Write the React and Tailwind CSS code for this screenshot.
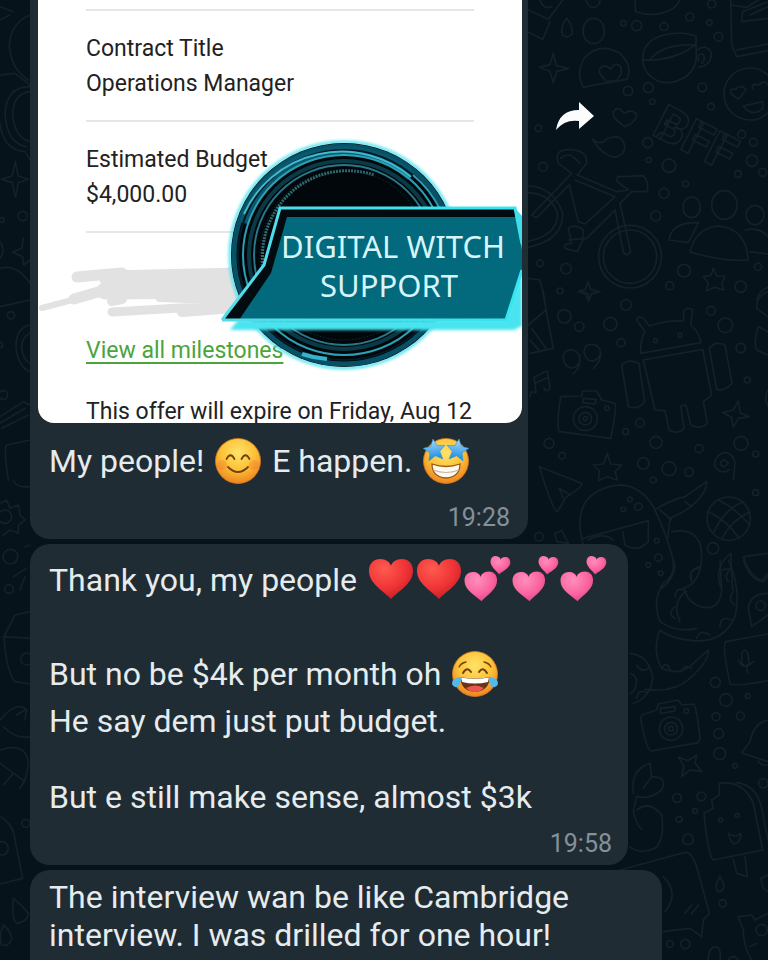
import React from "react";

const THIRD = 1 / 3;

function Dots({ items }) {
  return items.map(([x, y, r]) => <circle key={`${x}-${y}`} cx={x} cy={y} r={r} />);
}

function Wallpaper() {
  return (
    <svg
      aria-hidden="true"
      viewBox="0 0 768 960"
      preserveAspectRatio="xMaxYMin slice"
      className="absolute inset-0 h-full w-full"
      fill="none"
      stroke="#132128"
      strokeLinecap="round"
      strokeLinejoin="round"
      strokeWidth="5"
    >
      {/* upper right: cups, hearts, bicycle, people */}
      <g transform={`translate(520 0) scale(${THIRD})`}>
        <path d="M345 0 L347 35 Q400 55 455 28 Q475 15 478 0" />
        <path d="M25 30 L85 58 L128 0 M22 95 L68 118 L90 65 M60 0 Q70 30 95 20" />
        <path d="M140 55 Q118 85 128 105 Q145 118 157 100 Q160 80 140 55Z" />
        <ellipse cx="221" cy="93" rx="32" ry="38" />
        <path d="M198 0 Q205 25 225 22 Q240 15 240 0" />
        <path d="M100 160 L108 196 L145 206 L110 214 L100 248 L90 214 L58 202 L90 194Z" />
        <path d="M190 262 Q165 215 195 172 Q240 125 300 160 Q340 200 320 238 L265 248 Q220 255 190 262Z" />
        <path d="M262 245 Q225 215 245 200 Q262 195 272 208 Q285 185 300 197 Q312 220 290 240Z" />
        <path d="M368 180 Q365 130 420 108 Q480 90 528 108 L528 150 Q535 200 500 228 Q460 255 420 245 Q370 225 368 180 Q460 185 525 135 Q430 130 390 178" />
        <path d="M530 150 Q560 130 573 158 Q577 195 535 202 M536 182 Q530 160 548 162 Q560 175 545 190" />
        <path d="M632 0 L635 135 L650 170 L744 152 M650 150 L744 132 M635 15 L680 22 L715 0 M744 55 L665 65 L668 35 L744 5 M690 45 L744 20" />
        <circle cx="690" cy="282" r="78" />
        <path d="M635 282 Q625 265 645 268 Q665 250 678 270 L655 298Z M700 268 Q690 248 715 255 Q735 238 744 255 M670 318 L728 305 Q735 335 700 338 Q680 335 670 318Z" />
        <path d="M315 380 Q275 355 280 335 Q295 315 312 340 Q340 325 350 345 Q350 365 315 380Z" />
        <path d="M218 418 Q245 438 258 418 Q295 400 310 425 Q325 460 285 472 Q245 465 218 418Z" />
        <text
          transform="translate(392 402) rotate(27)"
          className="font-['Roboto',sans-serif] font-black"
          fontSize="145"
        >
          BFF
        </text>
        <path d="M155 520 L115 490 Q100 450 145 448 Q205 450 200 490 L172 525 L290 575 L325 570 L292 545 Q285 525 310 530 L370 527 Q390 550 380 575 L335 575 L300 610 L332 755 Q320 775 310 755 L285 630 L200 715 L145 720 M155 520 L35 645 Q50 660 62 640 L148 555 L175 665 L195 672 L285 590 L165 540 M122 475 Q145 455 165 475 L180 490" />
        <path d="M145 685 Q165 670 190 690 L188 722 L172 755 L135 745 Q130 730 155 730Z" />
        <circle cx="330" cy="770" r="94" />
        <circle cx="330" cy="770" r="80" />
        <path d="M25 558 Q100 560 128 640 Q130 720 25 742 M25 578 Q92 580 113 642 Q112 705 25 724" />
        <ellipse cx="515" cy="622" rx="26" ry="31" />
        <ellipse cx="613" cy="615" rx="38" ry="43" />
        <ellipse cx="705" cy="645" rx="27" ry="29" />
        <path d="M510 755 Q530 680 600 678 Q680 690 684 780 Q600 785 510 755Z M447 720 Q455 665 535 668 L505 728Z M675 690 Q720 680 744 710 M690 755 L744 762" />
        <path d="M580 805 L590 828 L615 828 L605 850 L612 870 L585 862 L560 872 L565 848 L550 830 L573 826Z" />
        <path d="M205 845 L212 868 L235 875 L214 882 L205 900 L196 882 L175 875 L196 868Z M25 835 L60 840 L75 900 M710 900 Q720 870 744 862" />
        <Dots items={[[350,77,15],[432,80,12],[509,51,12],[595,110,13],[575,12,12],[324,273,14],[385,263,15],[547,262,13],[573,320,10],[383,428,15],[447,497,20],[432,580,15],[407,648,15],[497,552,9],[665,403,12],[700,427,12],[696,482,17],[654,522,10],[728,517,12],[69,500,13],[55,385,10],[138,806,16],[60,790,10],[492,812,19],[449,857,12],[662,860,17],[714,800,11],[310,70,8],[568,68,8],[397,305,8],[386,480,8],[120,873,9]]} />
      </g>

      {/* middle right: robot, camera, elephant */}
      <g transform={`translate(520 290) scale(${THIRD})`}>
        <path d="M25 105 L78 60 L68 0 M78 60 L100 175 L30 190 M35 115 L80 178 M30 150 L60 185" />
        <path d="M180 215 Q165 240 145 232 Q120 210 135 185 Q160 170 178 195 Q185 230 160 252 M240 195 Q225 220 205 210 Q183 190 198 168 Q225 155 240 178 Q248 210 220 235" />
        <path d="M30 320 Q30 300 48 308 L42 262 L82 242 L90 295 Q75 310 72 292 M45 280 L85 262" />
        <path d="M362 190 Q360 150 375 125 L350 90 Q352 75 370 85 L388 108 Q440 90 490 93 L492 62 Q505 50 518 60 L512 105 Q540 130 543 158 L362 190Z" />
        <circle cx="407" cy="152" r="6" /><circle cx="480" cy="136" r="6" />
        <path d="M370 210 L548 178 L575 315 L550 335 L562 400 Q540 420 512 405 L498 345 L482 348 L492 415 Q475 435 447 420 L435 362 L405 360Z" />
        <path d="M305 225 Q325 205 357 220 L374 335 Q355 360 325 350Z M568 175 Q585 152 615 165 L636 280 Q615 305 590 298Z" />
        <path d="M122 320 L185 318 L188 303 L230 303 L245 330 L285 340 Q292 350 272 445 L118 425 Q108 410 122 320Z M190 325 L228 328 L225 342 L188 338Z" />
        <circle cx="196" cy="386" r="36" /><circle cx="196" cy="386" r="19" /><circle cx="196" cy="386" r="6" /><circle cx="261" cy="355" r="7" />
        <path d="M655 332 L660 368 L688 380 L655 385 L640 412 L635 382 L608 368 L640 360Z" />
        <path d="M262 490 L272 522 L305 525 L285 545 L292 570 L262 560 L235 572 L238 542 L220 525 L250 522Z" />
        <path d="M58 530 L185 580 Q190 590 140 620 L112 665 Q100 665 58 530Z M118 595 L150 615 M118 595 L130 625" />
        <path d="M640 568 L645 520 Q640 487 610 488 Q580 500 585 530 Q600 555 628 540 M625 520 Q610 500 602 520 Q608 540 625 520" />
        <path d="M190 765 Q155 640 240 600 Q340 555 400 650 Q440 730 465 830 Q460 870 425 895 M190 745 L385 692 L385 755 Q350 790 315 765 L308 725 M205 750 Q250 725 280 750" />
        <path d="M405 660 Q450 630 495 620 L560 575 Q560 620 490 665 L450 685 L443 745 M455 725 Q540 710 545 790 Q545 880 490 895 M540 830 Q500 840 515 875 M420 660 L455 690 M495 635 L515 650" />
        <circle cx="626" cy="686" r="65" />
        <path d="M565 665 Q620 690 658 745 M595 630 Q640 650 690 705 M580 730 Q610 660 670 635 M605 745 Q635 690 690 665" />
        <path d="M632 790 Q580 830 603 895 M632 790 L638 900 M605 840 L630 835 M670 800 L744 790 M670 800 Q690 860 725 872 L744 850 M105 730 L125 722 L145 760 L110 755Z" />
        <path d="M744 5 Q710 15 710 55 L744 80 M715 110 L744 125 M715 110 Q700 160 710 180 L744 195 M744 300 Q730 320 744 350" />
        <path d="M180 0 L205 12 L205 35 L215 12 L240 5" />
        <Dots items={[[318,45,16],[133,79,20],[178,110,14],[271,102,20],[303,158,12],[573,62,13],[616,106,22],[662,174,14],[682,270,9],[360,398,13],[408,457,18],[537,476,12],[663,460,21],[370,520,17],[447,536,21],[507,546,13],[87,460,15],[126,497,10],[317,425,9],[400,570,9],[707,608,9],[579,775,17],[707,492,9],[57,740,13],[355,650,11],[310,658,7],[330,628,7],[415,803,11],[385,825,7],[422,850,7],[410,752,7]]} />
      </g>

      {/* lower right: octopus, camera, ice lolly */}
      <g transform={`translate(620 560) scale(${THIRD})`}>
        <path d="M160 0 Q165 50 130 70 Q95 120 120 185 Q170 220 230 205 M300 0 L305 90 Q300 150 250 142 Q210 135 195 95 Q155 130 180 185 M325 0 Q365 90 345 170 Q310 250 220 242 Q150 235 120 210 Q95 270 125 325 Q180 350 220 310 L265 270 Q270 300 210 355 Q160 400 75 388" />
        <path d="M215 60 Q205 30 235 25 M165 110 Q170 75 200 95 M165 175 Q140 160 165 140 M300 200 Q300 165 335 180 M230 235 Q240 205 270 225 M345 135 Q320 120 340 95 M325 65 Q310 45 330 30 M125 325 Q140 300 150 330 M185 335 Q190 310 215 325" />
        <path d="M30 280 Q85 285 98 350 Q95 410 40 430 M30 340 Q55 350 48 375 Q45 395 30 400 M50 315 Q65 340 85 325 M50 415 Q55 385 82 398 M370 0 Q390 60 430 65 L444 50 M444 100 Q390 100 385 145 L395 200 L444 165" />
        <circle cx="422" cy="137" r="14" />
        <path d="M444 222 L318 245 Q305 250 330 370 Q335 382 444 362 M365 280 Q375 260 383 280 L388 310 Q375 325 365 310Z M355 300 Q370 335 400 305 M380 322 L383 340" />
        <path d="M65 465 L110 450 L115 432 L175 420 L185 435 L220 432 Q230 440 240 535 L235 548 L95 573 Q80 575 62 475Z M120 445 L165 440 L165 453 L122 460Z" />
        <circle cx="153" cy="506" r="35" /><circle cx="153" cy="506" r="19" /><circle cx="153" cy="506" r="7" /><circle cx="199" cy="453" r="7" />
        <path d="M175 592 L205 602 L230 585 L225 610 L245 635 L210 630 L185 650 L192 618Z M444 480 Q400 490 390 545 L365 578 L444 605 M415 603 Q425 620 444 615" />
        <path d="M40 700 Q30 630 90 610 L95 650 Q145 650 125 690 Q90 720 50 710 L40 750 Q45 790 65 808 M50 750 Q90 720 125 765 Q135 840 105 865 Q60 885 28 860 M95 650 L70 685" />
        <path d="M298 670 Q370 660 400 730 L428 870 L280 900 Q265 890 252 760 L280 745 L275 720 L298 705Z M350 668 Q410 675 425 745 L444 840 M340 897 L350 940 L382 950 L375 890 M325 820 Q345 835 362 820 Q365 845 343 852 Q330 845 325 820" />
        <circle cx="302" cy="780" r="6" /><circle cx="352" cy="766" r="6" />
        <path d="M0 930 L195 877 Q215 875 230 920 L268 1060 L250 1080 L245 1130 L210 1105 L130 1115 M130 950 Q180 1000 135 1055 M195 1060 L215 1035 M215 1062 L235 1035 M300 950 Q280 980 295 995 Q325 990 300 950 M444 945 L422 955 L430 985 L444 995" />
        <path d="M355 1070 L395 1065 L405 1080 L444 1060 M355 1070 L370 1110 Q370 1160 395 1200 M265 1200 Q265 1160 290 1160 Q305 1170 300 1200 M390 1160 L410 1150 M325 1200 Q340 1180 355 1200" />
        <circle cx="425" cy="1110" r="17" />
        <Dots items={[[286,367,15],[318,420,19],[288,470,12],[361,468,12],[296,521,15],[299,581,18],[383,408,7],[345,618,7],[171,714,13],[244,709,13],[225,753,7],[177,778,9],[204,838,16],[308,1030,11],[150,1152,10],[196,1152,14],[430,670,14]]} />
      </g>

      {/* left margin, visible beside the bubbles */}
      <g transform={`scale(${THIRD})`}>
        <path d="M0 20 L40 35 M0 60 L30 45 M90 45 Q30 70 28 140 Q35 210 85 240 M0 225 L45 220 L90 255 M90 260 Q20 260 15 340 Q20 430 80 440 M90 275 Q40 280 38 345 Q45 415 90 425 M0 370 Q10 450 75 455 L90 480" />
        <path d="M46 485 L54 527 L85 538 L55 548 L47 592 L37 548 L5 538 L37 527Z M70 715 L65 745 L38 757 L68 770 L70 795 L90 780 M0 725 Q18 750 0 775 M0 805 Q50 790 90 850 M0 920 L90 900 M90 975 Q45 985 48 1045 Q55 1100 90 1115 M90 1000 Q65 1010 65 1045 Q68 1075 90 1090 M0 1250 L70 1205 L90 1215 M0 1270 L75 1225 M5 1285 L85 1245 M90 1320 L20 1335 Q10 1340 25 1440" />
        <Dots items={[[68,648,14],[33,946,11],[10,1185,13],[5,660,7],[0,1035,8]]} />
      </g>
      <g transform={`translate(0 480) scale(${THIRD})`}>
        <path d="M40 0 Q50 25 90 20 M0 70 L20 60 L30 85 L55 75 L60 105 L75 120 L55 135 L55 160 L30 150 L10 165 M75 200 L90 195 M40 290 L80 265 M60 330 L75 290 M90 395 L45 405 L12 470 L90 475 M12 470 Q20 580 45 605 L90 612 M0 720 Q50 660 80 690 L75 720 M10 740 Q50 780 90 770 M50 705 L75 690 M0 810 Q80 785 85 850 Q80 900 60 925 M0 850 L75 905 M40 880 L10 915 M0 1010 Q40 1030 45 1080 L68 1195 L0 1212 M40 1255 Q35 1320 50 1330 Q85 1325 85 1300 Q65 1275 40 1255 M10 1335 Q-5 1370 5 1395 Q30 1400 35 1375 Q30 1350 10 1335" />
        <Dots items={[[15,110,20],[31,230,22],[27,327,13],[80,537,18],[77,1030,12],[5,1105,20]]} />
      </g>
    </svg>
  );
}

function EmojiFrame({ label, children }) {
  return (
    <svg role="img" aria-label={label} viewBox="0 0 48 48" className="h-12 w-12 shrink-0">
      {children}
    </svg>
  );
}

function FaceBase({ id }) {
  return (
    <>
      <defs>
        <radialGradient id={id} cx="50%" cy="32%" r="68%">
          <stop offset="0" stopColor="#ffe36a" />
          <stop offset="0.55" stopColor="#fcc238" />
          <stop offset="1" stopColor="#ee8420" />
        </radialGradient>
      </defs>
      <circle cx="24" cy="24" r="22.5" fill={`url(#${id})`} stroke="#d97a20" strokeWidth="0.8" />
    </>
  );
}

function Smile() {
  return (
    <EmojiFrame label="smiling face">
      <FaceBase id="face-smile" />
      <ellipse cx="8" cy="28" rx="5" ry="5" fill="#f4662d" opacity="0.3" />
      <ellipse cx="40" cy="28" rx="5" ry="5" fill="#f4662d" opacity="0.3" />
      <g fill="none" stroke="#74400f" strokeWidth="1.8" strokeLinecap="round">
        <path d="M12.5 22 Q16.5 14.5 20.5 22 M27.5 22 Q31.5 14.5 35.5 22" />
        <path d="M14 30 Q24 40 34 30" />
      </g>
    </EmojiFrame>
  );
}

function StarEyes() {
  const star = "M0 -11 L3.2 -4 L11 -3.2 L5 2 L7 10 L0 5.8 L-7 10 L-5 2 L-11 -3.2 L-3.2 -4Z";
  return (
    <EmojiFrame label="star-struck face">
      <FaceBase id="face-star" />
      <defs>
        <linearGradient id="star-blue" x1="0" y1="0" x2="0" y2="1">
          <stop offset="0" stopColor="#a5dcff" />
          <stop offset="1" stopColor="#1688df" />
        </linearGradient>
      </defs>
      <path d="M10 27 Q24 32 38 27 Q38 40 24 41 Q10 40 10 27Z" fill="#fffaf0" stroke="#9b5920" strokeWidth="1.3" />
      <path d="M11 33 Q24 38 37 33" fill="none" stroke="#c5b8a8" strokeWidth="1.2" />
      <g fill="url(#star-blue)" stroke="#3295d4" strokeWidth="0.6">
        <path transform="translate(12.5 13) rotate(-8)" d={star} />
        <path transform="translate(35.5 13) rotate(8)" d={star} />
      </g>
    </EmojiFrame>
  );
}

function Joy() {
  return (
    <EmojiFrame label="face with tears of joy">
      <FaceBase id="face-joy" />
      <g fill="none" stroke="#74400f" strokeWidth="2" strokeLinecap="round">
        <path d="M12 23 Q16 16 20 22 M28 22 Q32 16 36 23" />
        <path d="M8 17 Q10 13 15 12 M33 12 Q38 13 40 17" strokeWidth="1.3" />
      </g>
      <path d="M9 27 Q24 30 39 27 Q38 41 24 42 Q10 41 9 27Z" fill="#6b3214" />
      <path d="M10 27.5 Q24 30 38 27.5 L37 32 Q24 35 11 32Z" fill="#fff" />
      <path d="M15 38 Q24 33 33 38 Q29 42 24 42 Q19 42 15 38Z" fill="#e8584e" />
      <path d="M10 27 Q0 28 1 34 Q3 39 8 36 Q10 33 10 27Z M38 27 Q48 28 47 34 Q45 39 40 36 Q38 33 38 27Z" fill="#55b9e8" />
    </EmojiFrame>
  );
}

const HEART = "M0 20 C-6 13 -22 5 -22 -8 C-22 -16 -17 -20 -11 -20 C-5 -20 -1 -17 0 -13 C1 -17 5 -20 11 -20 C17 -20 22 -16 22 -8 C22 5 6 13 0 20Z";

function RedHeart({ id }) {
  return (
    <EmojiFrame label="red heart">
      <defs>
        <radialGradient id={id} cx="35%" cy="25%" r="80%">
          <stop offset="0" stopColor="#ff5a50" />
          <stop offset="0.6" stopColor="#f03436" />
          <stop offset="1" stopColor="#c41f27" />
        </radialGradient>
      </defs>
      <path transform="translate(24 23)" d={HEART} fill={`url(#${id})`} />
    </EmojiFrame>
  );
}

function TwoHearts({ id }) {
  return (
    <EmojiFrame label="two hearts">
      <defs>
        <radialGradient id={id} cx="38%" cy="28%" r="80%">
          <stop offset="0" stopColor="#ff8fbd" />
          <stop offset="0.6" stopColor="#fb639f" />
          <stop offset="1" stopColor="#dd3f83" />
        </radialGradient>
      </defs>
      <g fill={`url(#${id})`}>
        <path transform="translate(18 30.5) rotate(-2) scale(0.74)" d={HEART} />
        <path transform="translate(37 9.5) rotate(6) scale(0.45)" d={HEART} />
      </g>
    </EmojiFrame>
  );
}

function Logo() {
  return (
    <svg viewBox="220 120 302 260" className="absolute right-0 top-[120px] h-[260px] w-[302px]">
      <defs>
        <linearGradient id="glow-edge" x1="0" y1="0" x2="1" y2="0">
          <stop offset="0" stopColor="#55dbe8" />
          <stop offset="1" stopColor="#35e5f2" />
        </linearGradient>
        <filter id="soft" x="-10%" y="-10%" width="120%" height="120%">
          <feGaussianBlur stdDeviation="1.5" />
        </filter>
      </defs>
      <ellipse cx="344" cy="255" rx="114" ry="113" fill="none" stroke="#4fe3ef" strokeWidth="3" filter="url(#soft)" />
      <ellipse cx="344" cy="255" rx="113" ry="112" fill="#01070b" />
      <g fill="none">
        <ellipse cx="344" cy="255" rx="110" ry="109" stroke="#075065" strokeWidth="5" />
        <path d="M244 223 A104 104 0 0 1 411 176" stroke="#0a586d" strokeWidth="10" />
        <ellipse cx="344" cy="255" rx="106" ry="105" stroke="#041a24" strokeWidth="2" />
        <path d="M244 214 A107 106 0 0 1 411 177" stroke="#41b9ce" strokeWidth="2" />
        <path d="M413 175 A106 106 0 0 1 440 209" stroke="#2a9db4" strokeWidth="2" />
        <ellipse cx="344" cy="255" rx="101" ry="100" stroke="#2ba0b6" strokeWidth="2" />
        <ellipse cx="344" cy="255" rx="95" ry="94" stroke="#0b3a47" strokeWidth="4" />
        <ellipse cx="344" cy="255" rx="90" ry="90" stroke="#28798a" strokeWidth="2" />
        <path d="M274 300 A85 86 0 0 1 374 175" stroke="#316b70" strokeWidth="3" strokeDasharray="2 1" />
        <ellipse cx="344" cy="255" rx="84" ry="85" stroke="#143f47" strokeWidth="1" strokeDasharray="1 2" />
        <path d="M302 354 Q314 358 327 359" stroke="#35b4cc" strokeWidth="4" />
      </g>
      <path d="M230 330 L238 320 L505 320 L522 270 L522 326 L514 330Z" fill="#49e4ef" filter="url(#soft)" />
      <path d="M222 320 L264 265 L280 208 L515 208 L522 244 L522 270 L506 320Z" fill="#026a7c" />
      <path d="M222 320 L264 265 L280 208 L515 208 L515 217 L287 217 L271 273 L239 320Z" fill="#020b10" />
      <path d="M222 320 L264 265 L280 208 L515 208 L522 244 M522 270 L506 320 L222 320" fill="none" stroke="url(#glow-edge)" strokeWidth="3" />
      <path d="M515 208 L522 216 L522 250Z" fill="#43dce8" />
      <g className="font-['Noto_Sans',sans-serif]" fill="#d5f5fb" fontSize="31" textAnchor="middle">
        <text x="393" y="258">DIGITAL WITCH</text>
        <text x="389" y="297">SUPPORT</text>
      </g>
    </svg>
  );
}

function Scribble() {
  return (
    <svg aria-hidden="true" viewBox="38 233 240 100" className="-ml-12 h-[100px] w-60">
      <g fill="none" stroke="#e2e2e2" strokeLinecap="round" strokeLinejoin="round">
        <path d="M42 308 L72 300 L98 293" strokeWidth="6" />
        <path d="M77 277 L122 273 M74 299 L105 290" strokeWidth="11" />
        <path d="M108 279 L240 276 M105 291 L240 290" strokeWidth="17" />
        <path d="M112 301 L122 299 M160 297 L240 300" strokeWidth="10" />
        <path d="M112 312 L180 308 L240 307" strokeWidth="9" />
        <path d="M182 312 L235 308" strokeWidth="10" />
      </g>
    </svg>
  );
}

function Bubble({ className, children }) {
  return (
    <article className={`max-w-full bg-[#202c33] text-[32px] leading-[38px] text-[#e6ebee] ${className}`}>
      {children}
    </article>
  );
}

function Time({ children }) {
  return <time className="block text-right text-[25px] leading-7 text-[#84909a]">{children}</time>;
}

function Field({ label, value }) {
  return (
    <div className="h-[111px] border-t-2 border-[#e6e6e6] pt-5">
      <dt>{label}</dt>
      <dd>{value}</dd>
    </div>
  );
}

export default function App() {
  return (
    <main className="relative h-screen overflow-hidden bg-[#07131a] font-['Roboto',sans-serif]">
      <Wallpaper />
      <div className="relative flex flex-col items-start gap-[5px] pl-[30px]">
        <div className="flex max-w-full items-start gap-7">
          <Bubble className="w-[498px] rounded-b-[20px] pb-[7px] pl-2 pr-1.5">
            <div className="relative h-[423px] overflow-hidden rounded-b-2xl bg-white px-12 pt-[9px] text-[23px] leading-[35px] text-[#222]">
              <dl>
                <Field label="Contract Title" value="Operations Manager" />
                <Field label="Estimated Budget" value="$4,000.00" />
              </dl>
              <div className="border-t-2 border-[#e6e6e6]">
                <Scribble />
              </div>
              <a href="#milestones" className="block whitespace-nowrap text-[#4ba43c] underline decoration-2 underline-offset-4">
                View all milestones
              </a>
              <p className="mt-[26px] whitespace-nowrap">This offer will expire on Friday, Aug 12</p>
              <Logo />
            </div>
            <p className="mt-2.5 flex h-14 items-center gap-2.5 whitespace-nowrap pl-[11px]">
              My people! <Smile /> E happen. <StarEyes />
            </p>
            <div className="mt-[15px] pr-3">
              <Time>19:28</Time>
            </div>
          </Bubble>
          <button type="button" aria-label="Forward message" className="mt-[102px] h-7 w-[38px]">
            <svg viewBox="0 0 38 28" className="h-7 w-[38px]" fill="#fbfcfc">
              <path d="M0 28 Q3 8 23 8 L23 0 L38 14 L23 27 L23 19 Q9 17 0 28Z" />
            </svg>
          </button>
        </div>

        <Bubble className="w-[598px] rounded-[20px] pb-[7px] pl-[19px] pr-4 pt-2">
          <p className="flex h-14 items-center whitespace-nowrap">
            <span className="mr-2.5">Thank you, my people</span>
            <RedHeart id="heart-a" />
            <RedHeart id="heart-b" />
            <TwoHearts id="hearts-a" />
            <TwoHearts id="hearts-b" />
            <TwoHearts id="hearts-c" />
          </p>
          <p className="mt-[38px] flex h-14 items-center gap-2.5 whitespace-nowrap">
            But no be $4k per month oh <Joy />
          </p>
          <p>He say dem just put budget.</p>
          <p className="mb-3.5 mt-[38px]">But e still make sense, almost $3k</p>
          <Time>19:58</Time>
        </Bubble>

        <Bubble className="w-[632px] rounded-t-[20px] pb-14 pl-[19px] pr-4 pt-2">
          <p className="max-w-[560px]">The interview wan be like Cambridge interview. I was drilled for one hour!</p>
        </Bubble>
      </div>
    </main>
  );
}
